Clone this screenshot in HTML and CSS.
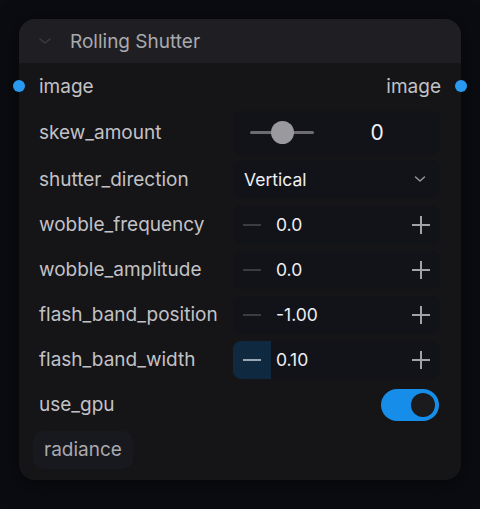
FILE: index.html
```html
<!DOCTYPE html>
<html>
<head>
<meta charset="utf-8">
<link rel="stylesheet" href="styles.css">
</head>
<body>
<div class="node">
  <div class="header">
    <svg class="chev" width="14" height="10" viewBox="0 0 14 10"><path d="M2 3 L7 7 L12 3" fill="none" stroke="#3a3a40" stroke-width="1.6" stroke-linecap="round" stroke-linejoin="round"/></svg>
    <span class="title">Rolling Shutter</span>
  </div>
  <div class="body">
    <div class="row io">
      <span class="dot dot-l"></span>
      <span class="label">image</span>
      <span class="label">image</span>
      <span class="dot dot-r"></span>
    </div>
    <div class="row slider-row">
      <span class="label">skew_amount</span>
      <div class="widget slider">
        <div class="track"><span class="thumb"></span></div>
        <span class="sval">0</span>
      </div>
    </div>
    <div class="row select-row">
      <span class="label">shutter_direction</span>
      <div class="widget select">
        <span class="selval">Vertical</span>
        <svg width="12" height="8" viewBox="0 0 12 8"><path d="M1.5 2 L6 6 L10.5 2" fill="none" stroke="#9a9aa0" stroke-width="1.4" stroke-linecap="round" stroke-linejoin="round"/></svg>
      </div>
    </div>
    <div class="row">
      <span class="label">wobble_frequency</span>
      <div class="widget stepper">
        <span class="btn minus"><span class="bar"></span></span>
        <span class="num">0.0</span>
        <span class="btn plus"><span class="ph"></span><span class="pv"></span></span>
      </div>
    </div>
    <div class="row">
      <span class="label">wobble_amplitude</span>
      <div class="widget stepper">
        <span class="btn minus"><span class="bar"></span></span>
        <span class="num">0.0</span>
        <span class="btn plus"><span class="ph"></span><span class="pv"></span></span>
      </div>
    </div>
    <div class="row">
      <span class="label">flash_band_position</span>
      <div class="widget stepper">
        <span class="btn minus"><span class="bar"></span></span>
        <span class="num">-1.00</span>
        <span class="btn plus"><span class="ph"></span><span class="pv"></span></span>
      </div>
    </div>
    <div class="row">
      <span class="label">flash_band_width</span>
      <div class="widget stepper">
        <span class="btn minus active"><span class="bar"></span></span>
        <span class="num">0.10</span>
        <span class="btn plus"><span class="ph"></span><span class="pv"></span></span>
      </div>
    </div>
    <div class="row">
      <span class="label">use_gpu</span>
      <div class="toggle"><span class="knob"></span></div>
    </div>
    <div class="row chiprow">
      <span class="chip">radiance</span>
    </div>
  </div>
</div>
</body>
</html>
```
FILE: styles.css
```css
html, body {
  margin: 0;
  padding: 0;
}
body {
  width: 480px;
  height: 509px;
  background: #0a0c11;
  font-family: Inter, "Noto Sans", sans-serif;
  overflow: hidden;
}
.node {
  position: relative;
  margin: 19px 0 0 19px;
  width: 442px;
  height: 461px;
  border-radius: 16px;
  background: #151417;
  box-shadow: 0 4px 24px rgba(0,0,0,0.5);
}
.header {
  height: 44px;
  background: #1f1f23;
  border-radius: 16px 16px 0 0;
  display: flex;
  align-items: center;
  padding-left: 19px;
  gap: 18px;
}
.title {
  color: #a9a9ae;
  font-size: 19px;
}
.body {
  padding: 0 0 8px 0;
}
.row {
  position: relative;
  height: 45px;
  display: flex;
  align-items: center;
  justify-content: space-between;
  padding: 0 21px 0 20px;
}
.io { height: 46px; padding-right: 20px; }
.slider-row { height: 47px; }
.select-row { height: 46px; }
.label {
  color: #c2c2c6;
  font-size: 19px;
}
.dot {
  position: absolute;
  top: 50%;
  width: 12px;
  height: 12px;
  margin-top: -6px;
  border-radius: 50%;
  background: #2a9af0;
}
.dot-l { left: -6px; }
.dot-r { right: -6px; }
.widget {
  width: 207px;
  height: 38px;
  box-sizing: border-box;
  border-radius: 8px;
  background: #111318;
  display: flex;
  align-items: center;
}
.slider {
  padding: 0 0 0 17px;
  height: 44px;
}
.track {
  position: relative;
  width: 64px;
  height: 3px;
  border-radius: 2px;
  background: #6b6b70;
}
.thumb {
  position: absolute;
  left: 21px;
  top: -10px;
  width: 23px;
  height: 23px;
  border-radius: 50%;
  background: #9a9a9e;
}
.sval {
  flex: 1;
  text-align: center;
  color: #f2f2f4;
  font-size: 21px;
}
.select {
  padding: 0 14px 0 11px;
  justify-content: space-between;
}
.selval {
  color: #f0f0f2;
  font-size: 17.5px;
}
.stepper {
  padding: 0;
}
.btn {
  position: relative;
  width: 38px;
  height: 38px;
  display: flex;
  align-items: center;
  justify-content: center;
}
.btn.active {
  background: #0f2a40;
  border-radius: 8px 0 0 8px;
}
.bar {
  width: 18px;
  height: 2px;
  background: #3a3c42;
}
.active .bar {
  background: #9aa6b2;
}
.num {
  flex: 1;
  color: #f0f0f2;
  font-size: 17.5px;
  padding-left: 5px;
}
.ph, .pv {
  position: absolute;
  background: #a2a2a7;
}
.ph {
  width: 18px;
  height: 2px;
  left: 10px;
  top: 18px;
}
.pv {
  width: 2px;
  height: 18px;
  left: 18px;
  top: 10px;
}
.toggle {
  position: relative;
  width: 58px;
  height: 32px;
  border-radius: 16px;
  background: #168ee9;
  margin-right: 1px;
}
.knob {
  position: absolute;
  right: 4px;
  top: 4px;
  width: 24px;
  height: 24px;
  border-radius: 50%;
  background: #1b1a1d;
}
.chiprow {
  justify-content: flex-start;
  padding-left: 14px;
}
.chip {
  background: #18191e;
  color: #a9a9ae;
  font-size: 19px;
  border-radius: 10px;
  padding: 7px 11px 8px 11px;
}
```
